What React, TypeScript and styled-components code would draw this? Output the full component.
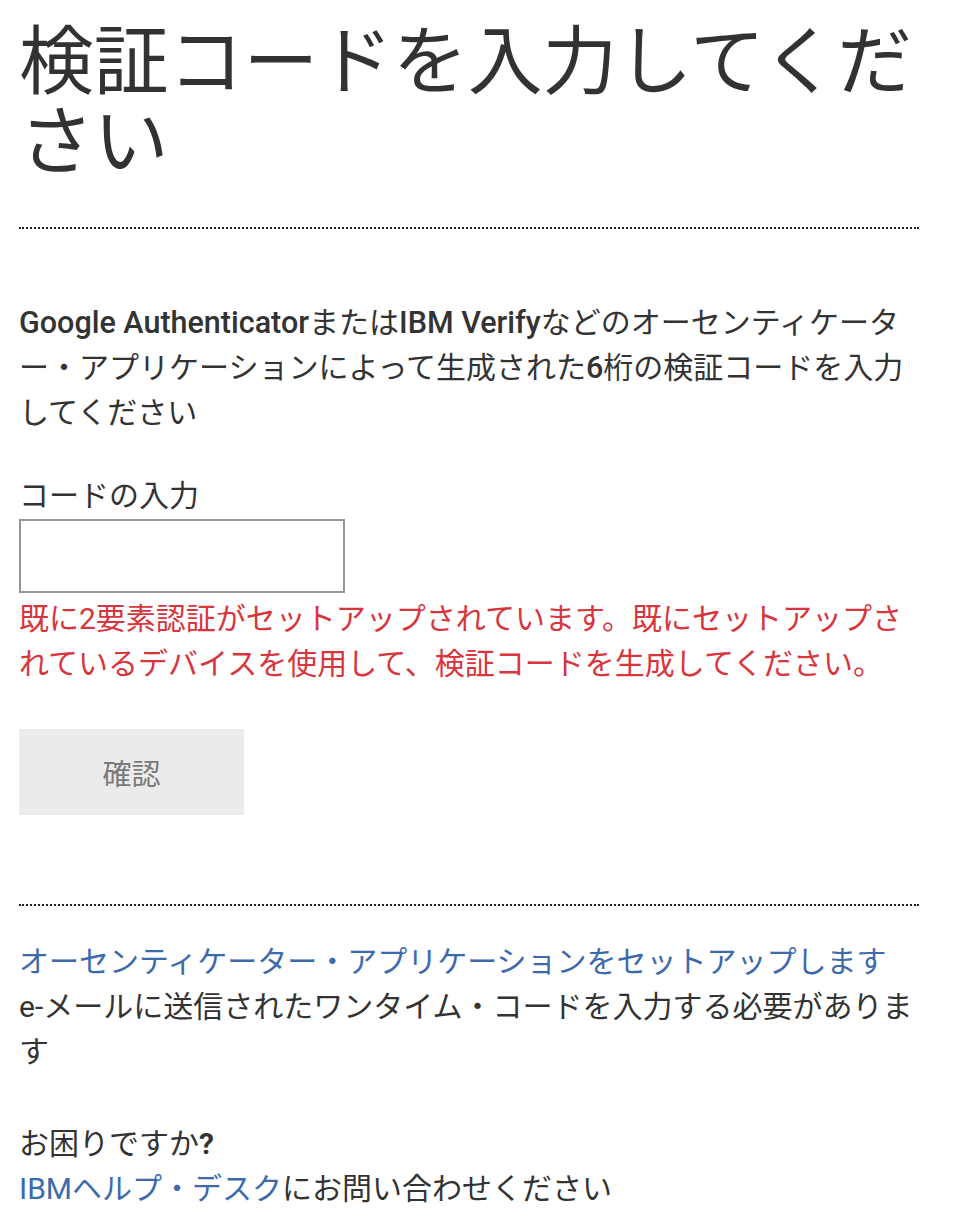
import styled, { createGlobalStyle } from 'styled-components';

const GlobalStyle = createGlobalStyle`
  html, body {
    margin: 0;
    padding: 0;
    background: #fff;
  }
  body {
    font-family: Roboto, "Noto Sans CJK JP", sans-serif;
    color: #333;
  }
`;

export default function App() {
  return <>
    <GlobalStyle />
    <Page>
      <Title>検証コードを入力してください</Title>
      <Divider />

      <Intro>
        <strong>Google Authenticator</strong>または<strong>IBM Verify</strong>などのオーセンティケーター・アプリケーションによって生成された<strong>6</strong>桁の検証コードを入力してください
      </Intro>

      <Field>
        <Label htmlFor="otp">コードの入力</Label>
        <CodeInput id="otp" type="text" />
        <ErrorText>既に2要素認証がセットアップされています。既にセットアップされているデバイスを使用して、検証コードを生成してください。</ErrorText>
      </Field>

      <SubmitButton disabled>確認</SubmitButton>

      <Divider $gap={89} />

      <Footer>
        <Link href="#">オーセンティケーター・アプリケーションをセットアップします</Link>
        <Line>e-メールに送信されたワンタイム・コードを入力する必要があります</Line>
      </Footer>

      <Help>
        <Line>お困りですか<strong>?</strong></Line>
        <Line><Link href="#">IBMヘルプ・デスク</Link>にお問い合わせください</Line>
      </Help>
    </Page>
  </>;
}

const Page = styled.main`
  width: 900px;
  padding: 16px 0 10px 19px;
  display: flex;
  flex-direction: column;
  align-items: flex-start;
  font-size: 30px;
  line-height: 45px;
`;

const Title = styled.h1`
  margin: 0;
  font-family: "Noto Sans CJK JP", sans-serif;
  font-weight: 400;
  font-size: 74.8px;
  line-height: 80px;
  color: #323232;
`;

const Divider = styled.hr<{ $gap?: number }>`
  align-self: stretch;
  margin: ${p => p.$gap ?? 51}px 0 0;
  border: none;
  border-top: 2px dotted #222;
  height: 0;
`;

const Intro = styled.p`
  margin: 71px 0 0;
  strong {
    font-weight: 500;
    font-size: 30.5px;
  }
`;

const Field = styled.div`
  margin-top: 36px;
  display: flex;
  flex-direction: column;
  align-items: flex-start;
`;

const Label = styled.label`
  display: block;
  line-height: 45px;
  margin-top: 2px;
  margin-bottom: 1px;
`;

const CodeInput = styled.input`
  box-sizing: border-box;
  width: 326px;
  height: 74px;
  border: 2px solid #8f9898;
  background: #fff;
  font-size: 29px;
  padding: 0 12px;
  outline: none;
`;

const ErrorText = styled.p`
  margin: 3px 0 0;
  color: #d8353c;
`;

const SubmitButton = styled.button`
  margin-top: 43px;
  width: 225px;
  height: 86px;
  border: none;
  background: #ebebeb;
  color: #7a7a7a;
  font-family: "Noto Sans CJK JP", sans-serif;
  font-size: 29px;
`;

const Footer = styled.div`
  margin-top: 33px;
  display: flex;
  flex-direction: column;
  align-items: flex-start;
`;

const Help = styled.div`
  margin-top: 47px;
  display: flex;
  flex-direction: column;
  align-items: flex-start;
  strong {
    font-weight: 700;
  }
`;

const Line = styled.div``;

const Link = styled.a`
  color: #3d6aad;
  text-decoration: none;
`;
